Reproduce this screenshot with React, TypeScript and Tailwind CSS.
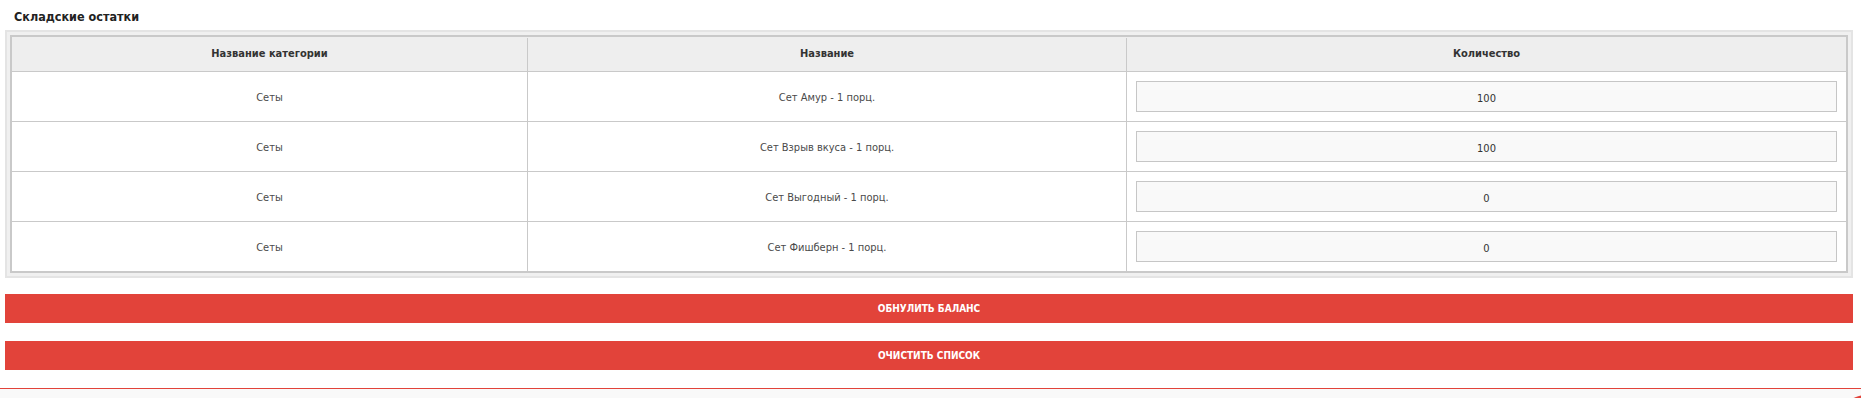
import React from "react";

const rows = [
  ["Сеты", "Сет Амур - 1 порц.", "100"],
  ["Сеты", "Сет Взрыв вкуса - 1 порц.", "100"],
  ["Сеты", "Сет Выгодный - 1 порц.", "0"],
  ["Сеты", "Сет Фишберн - 1 порц.", "0"],
];

export default function App() {
  return (
    <div className='relative h-[398px] overflow-hidden bg-white font-["Liberation_Sans_Narrow","DejaVu_Sans_Condensed","DejaVu_Sans",sans-serif] text-[#333]'>
      <div className="pl-[5px] pr-[8px]">
        <h2 className="pl-[9px] pt-[9px] pb-[5px] text-[12.5px] leading-[16px] font-bold text-[#222]">
          Складские остатки
        </h2>
        <div className="border-2 border-[#e4e4e4] bg-[#f0f0f0] p-[3px]">
          <div className="border-2 border-[#c9c9c9] bg-white">
            <div className="flex h-[35px] border-b border-[#c9c9c9] bg-[#eeeeee] pt-[1px] text-[11px] font-bold text-[#333]">
              <div className="flex w-[516px] items-center justify-center border-r border-[#c9c9c9]">
                Название категории
              </div>
              <div className="flex w-[599px] items-center justify-center border-r border-[#c9c9c9]">
                Название
              </div>
              <div className="flex flex-1 items-center justify-center">Количество</div>
            </div>
            <div className="divide-y divide-[#c9c9c9]">
              {rows.map((r, i) => (
                <div key={i} className="flex h-[50px] text-[11px] text-[#4a4a4a] last:h-[49px]">
                  <div className="flex w-[516px] items-center justify-center border-r border-[#c9c9c9] pt-[3px]">
                    {r[0]}
                  </div>
                  <div className="flex w-[599px] items-center justify-center border-r border-[#c9c9c9] pt-[3px]">
                    {r[1]}
                  </div>
                  <div className="flex flex-1 items-center px-[9px]">
                    <input
                      readOnly
                      defaultValue={r[2]}
                      className="h-[31px] w-full border border-[#c6c6c6] bg-[#f9f9f9] pt-[3px] text-center text-[11px] text-[#333] outline-none"
                    />
                  </div>
                </div>
              ))}
            </div>
          </div>
        </div>
        <button className="mt-[16px] flex h-[29px] w-full items-center justify-center bg-[#e2433a] text-[10px] font-bold uppercase text-white">
          Обнулить баланс
        </button>
        <button className="mt-[18px] flex h-[29px] w-full items-center justify-center bg-[#e2433a] text-[10px] font-bold uppercase text-white">
          Очистить список
        </button>
      </div>
      <div className="mt-[18px] h-[20px] border-t border-[#e2433a] bg-[#f9f9f9]" />
      <div className="absolute left-[1838px] top-[395px] h-[56px] w-[56px] rounded-full bg-[#e2433a]" />
    </div>
  );
}
